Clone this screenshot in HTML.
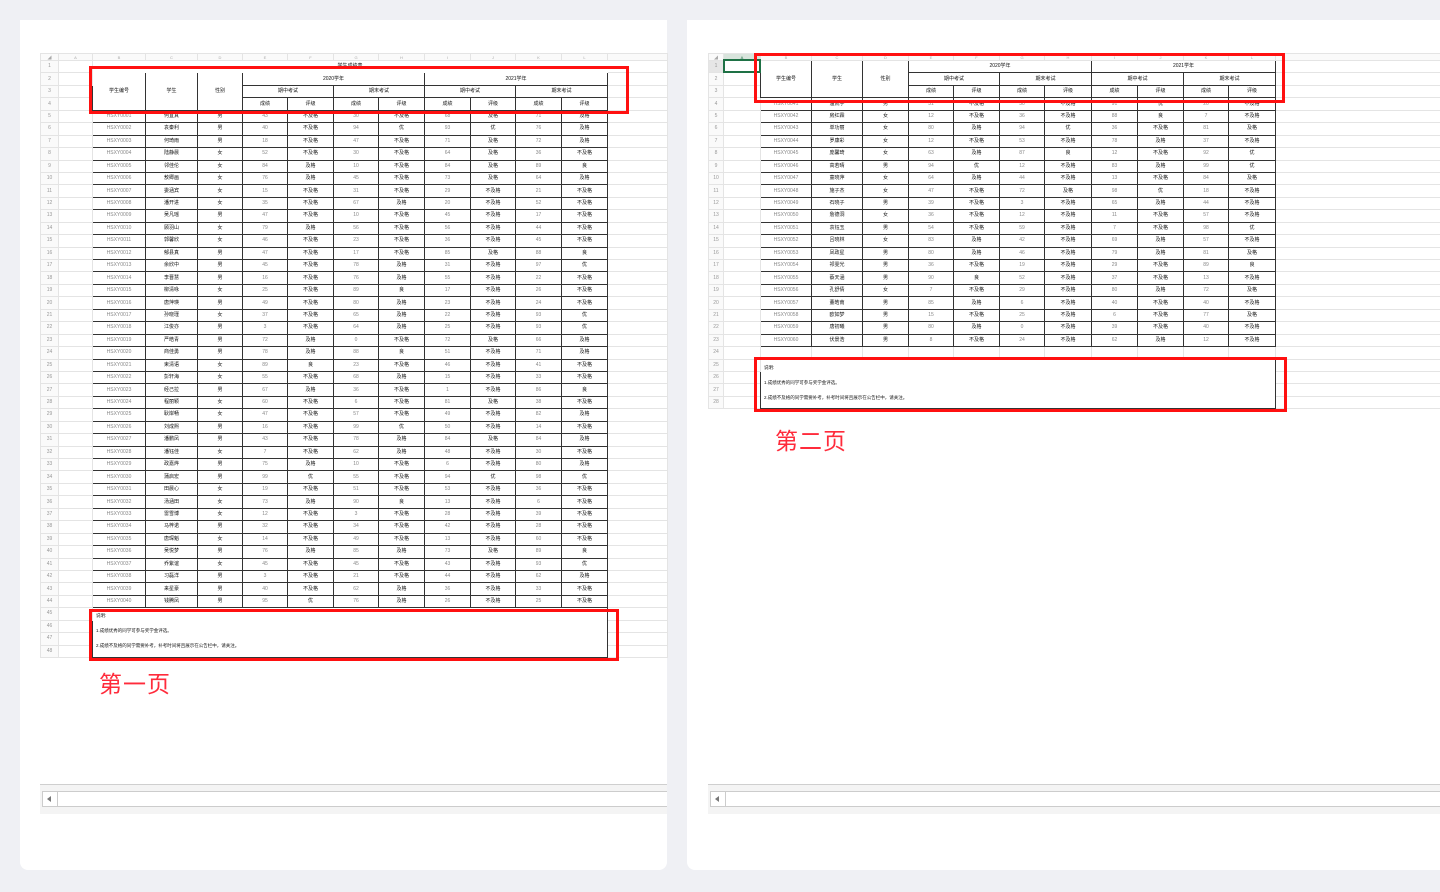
<!DOCTYPE html>
<html><head><meta charset="utf-8"><style>
html,body{margin:0;padding:0;width:1440px;height:892px;overflow:hidden;background:#eff0f4;font-family:"Liberation Sans","Noto Sans CJK SC",sans-serif}
.card{position:absolute;background:#fff;border-radius:0 0 8px 8px;overflow:hidden}
.sheet{position:absolute;border-collapse:collapse;table-layout:fixed;font-size:5px;line-height:5px}
.sheet td,.sheet th{border:1px solid #e4e4e4;padding:0;text-align:center;overflow:hidden;white-space:nowrap;color:#111;font-weight:normal}
.sheet tr{height:12.44px}
.sheet tr.ch{height:7px}
.sheet tr.ch th{color:#aaa;font-size:4px;background:#fafafa}
.sheet th.rn{color:#999;background:#fafafa}
.sheet td.k{border:1px solid #333}
tr.d>td:nth-child(n+3):nth-child(-n+13){border:1px solid #333}
tr.d>td:nth-child(3),tr.d>td:nth-child(6),tr.d>td:nth-child(8),tr.d>td:nth-child(10),tr.d>td:nth-child(12){color:#888}
.note{text-align:left!important;padding-left:3px!important;font-size:4.5px;line-height:15px;vertical-align:top}
.red{position:absolute;border:3px solid #ff1010;box-sizing:border-box}
.lbl{position:absolute;color:#ff2b3b;font-size:23px;font-family:"Noto Sans CJK SC",sans-serif;letter-spacing:1px}
.sb{position:absolute;height:29px;border-top:1px solid #cfcfcf;background:#f4f4f4}
.sb .bar{position:absolute;left:2px;right:0;top:6px;height:14px;background:#fff;border-top:1px solid #ccc;border-bottom:1px solid #ccc}
.sb .arr{position:absolute;left:0;top:0;width:14px;height:14px;border-right:1px solid #ccc;border-left:1px solid #ccc}
.sb .arr:after{content:"";position:absolute;left:4px;top:4px;border-right:4px solid #777;border-top:3px solid transparent;border-bottom:3px solid transparent}
.sel{position:absolute;border:2px solid #1e7145;box-sizing:border-box}
</style></head><body>

<div class="card" style="left:20px;top:20px;width:647px;height:850px"></div>
<div class="card" style="left:687px;top:20px;width:760px;height:850px"></div>

<!-- LEFT SHEET -->
<table class="sheet" style="left:40px;top:53px;width:627px">
<colgroup><col style="width:18px"><col style="width:34px"><col style="width:53px"><col style="width:52px"><col style="width:45px"><col style="width:45px"><col style="width:46px"><col style="width:45px"><col style="width:46px"><col style="width:46px"><col style="width:45px"><col style="width:46px"><col style="width:46px"><col style="width:60px"></colgroup>
<tr class="ch"><th>◢</th><th>A</th><th>B</th><th>C</th><th>D</th><th>E</th><th>F</th><th>G</th><th>H</th><th>I</th><th>J</th><th>K</th><th>L</th><th></th></tr>
<tr><th class="rn">1</th><td></td><td colspan="11" style="border-color:#fff">学生成绩表</td><td></td></tr>
<tr><th class="rn">2</th><td></td><td class="k" rowspan="3">学生编号</td><td class="k" rowspan="3">学生</td><td class="k" rowspan="3">性别</td><td class="k" colspan="4">2020学年</td><td class="k" colspan="4">2021学年</td><td></td></tr>
<tr><th class="rn">3</th><td></td><td class="k" colspan="2">期中考试</td><td class="k" colspan="2">期末考试</td><td class="k" colspan="2">期中考试</td><td class="k" colspan="2">期末考试</td><td></td></tr>
<tr><th class="rn">4</th><td></td><td class="k">成绩</td><td class="k">评级</td><td class="k">成绩</td><td class="k">评级</td><td class="k">成绩</td><td class="k">评级</td><td class="k">成绩</td><td class="k">评级</td><td></td></tr>
<tr class="d"><th class="rn">5</th><td></td><td>HSXY0001</td><td>何宜真</td><td>男</td><td>43</td><td>不及格</td><td>30</td><td>不及格</td><td>68</td><td>及格</td><td>71</td><td>及格</td><td></td></tr>
<tr class="d"><th class="rn">6</th><td></td><td>HSXY0002</td><td>袁秦利</td><td>男</td><td>40</td><td>不及格</td><td>94</td><td>优</td><td>93</td><td>优</td><td>76</td><td>及格</td><td></td></tr>
<tr class="d"><th class="rn">7</th><td></td><td>HSXY0003</td><td>何琦雨</td><td>男</td><td>18</td><td>不及格</td><td>47</td><td>不及格</td><td>71</td><td>及格</td><td>72</td><td>及格</td><td></td></tr>
<tr class="d"><th class="rn">8</th><td></td><td>HSXY0004</td><td>陆静晨</td><td>女</td><td>52</td><td>不及格</td><td>30</td><td>不及格</td><td>64</td><td>及格</td><td>36</td><td>不及格</td><td></td></tr>
<tr class="d"><th class="rn">9</th><td></td><td>HSXY0005</td><td>邻佳伦</td><td>女</td><td>84</td><td>及格</td><td>10</td><td>不及格</td><td>84</td><td>及格</td><td>89</td><td>良</td><td></td></tr>
<tr class="d"><th class="rn">10</th><td></td><td>HSXY0006</td><td>敖卿画</td><td>女</td><td>76</td><td>及格</td><td>45</td><td>不及格</td><td>73</td><td>及格</td><td>64</td><td>及格</td><td></td></tr>
<tr class="d"><th class="rn">11</th><td></td><td>HSXY0007</td><td>委涵宾</td><td>女</td><td>15</td><td>不及格</td><td>31</td><td>不及格</td><td>29</td><td>不及格</td><td>21</td><td>不及格</td><td></td></tr>
<tr class="d"><th class="rn">12</th><td></td><td>HSXY0008</td><td>潘开进</td><td>女</td><td>35</td><td>不及格</td><td>67</td><td>及格</td><td>20</td><td>不及格</td><td>52</td><td>不及格</td><td></td></tr>
<tr class="d"><th class="rn">13</th><td></td><td>HSXY0009</td><td>吴凡瑶</td><td>男</td><td>47</td><td>不及格</td><td>10</td><td>不及格</td><td>45</td><td>不及格</td><td>17</td><td>不及格</td><td></td></tr>
<tr class="d"><th class="rn">14</th><td></td><td>HSXY0010</td><td>顾羽山</td><td>女</td><td>79</td><td>及格</td><td>56</td><td>不及格</td><td>56</td><td>不及格</td><td>44</td><td>不及格</td><td></td></tr>
<tr class="d"><th class="rn">15</th><td></td><td>HSXY0011</td><td>郭馨欣</td><td>女</td><td>46</td><td>不及格</td><td>23</td><td>不及格</td><td>36</td><td>不及格</td><td>45</td><td>不及格</td><td></td></tr>
<tr class="d"><th class="rn">16</th><td></td><td>HSXY0012</td><td>郁县真</td><td>男</td><td>47</td><td>不及格</td><td>17</td><td>不及格</td><td>85</td><td>及格</td><td>88</td><td>良</td><td></td></tr>
<tr class="d"><th class="rn">17</th><td></td><td>HSXY0013</td><td>余欣中</td><td>男</td><td>45</td><td>不及格</td><td>78</td><td>及格</td><td>31</td><td>不及格</td><td>97</td><td>优</td><td></td></tr>
<tr class="d"><th class="rn">18</th><td></td><td>HSXY0014</td><td>李晋慧</td><td>男</td><td>16</td><td>不及格</td><td>76</td><td>及格</td><td>55</td><td>不及格</td><td>22</td><td>不及格</td><td></td></tr>
<tr class="d"><th class="rn">19</th><td></td><td>HSXY0015</td><td>柳清咏</td><td>女</td><td>25</td><td>不及格</td><td>89</td><td>良</td><td>17</td><td>不及格</td><td>26</td><td>不及格</td><td></td></tr>
<tr class="d"><th class="rn">20</th><td></td><td>HSXY0016</td><td>唐萍瑛</td><td>男</td><td>49</td><td>不及格</td><td>80</td><td>及格</td><td>23</td><td>不及格</td><td>24</td><td>不及格</td><td></td></tr>
<tr class="d"><th class="rn">21</th><td></td><td>HSXY0017</td><td>孙晓瑾</td><td>女</td><td>37</td><td>不及格</td><td>65</td><td>及格</td><td>22</td><td>不及格</td><td>93</td><td>优</td><td></td></tr>
<tr class="d"><th class="rn">22</th><td></td><td>HSXY0018</td><td>江俊亦</td><td>男</td><td>3</td><td>不及格</td><td>64</td><td>及格</td><td>25</td><td>不及格</td><td>93</td><td>优</td><td></td></tr>
<tr class="d"><th class="rn">23</th><td></td><td>HSXY0019</td><td>严皓青</td><td>男</td><td>72</td><td>及格</td><td>0</td><td>不及格</td><td>72</td><td>及格</td><td>66</td><td>及格</td><td></td></tr>
<tr class="d"><th class="rn">24</th><td></td><td>HSXY0020</td><td>商佳勇</td><td>男</td><td>78</td><td>及格</td><td>88</td><td>良</td><td>51</td><td>不及格</td><td>71</td><td>及格</td><td></td></tr>
<tr class="d"><th class="rn">25</th><td></td><td>HSXY0021</td><td>束清语</td><td>女</td><td>89</td><td>良</td><td>23</td><td>不及格</td><td>46</td><td>不及格</td><td>41</td><td>不及格</td><td></td></tr>
<tr class="d"><th class="rn">26</th><td></td><td>HSXY0022</td><td>彭轩海</td><td>女</td><td>55</td><td>不及格</td><td>68</td><td>及格</td><td>15</td><td>不及格</td><td>33</td><td>不及格</td><td></td></tr>
<tr class="d"><th class="rn">27</th><td></td><td>HSXY0023</td><td>经己拉</td><td>男</td><td>67</td><td>及格</td><td>36</td><td>不及格</td><td>1</td><td>不及格</td><td>86</td><td>良</td><td></td></tr>
<tr class="d"><th class="rn">28</th><td></td><td>HSXY0024</td><td>程丽颖</td><td>女</td><td>60</td><td>不及格</td><td>6</td><td>不及格</td><td>81</td><td>及格</td><td>38</td><td>不及格</td><td></td></tr>
<tr class="d"><th class="rn">29</th><td></td><td>HSXY0025</td><td>耿岸畅</td><td>女</td><td>47</td><td>不及格</td><td>57</td><td>不及格</td><td>49</td><td>不及格</td><td>82</td><td>及格</td><td></td></tr>
<tr class="d"><th class="rn">30</th><td></td><td>HSXY0026</td><td>刘成熙</td><td>男</td><td>16</td><td>不及格</td><td>99</td><td>优</td><td>50</td><td>不及格</td><td>14</td><td>不及格</td><td></td></tr>
<tr class="d"><th class="rn">31</th><td></td><td>HSXY0027</td><td>潘鹏凤</td><td>男</td><td>43</td><td>不及格</td><td>78</td><td>及格</td><td>84</td><td>及格</td><td>84</td><td>及格</td><td></td></tr>
<tr class="d"><th class="rn">32</th><td></td><td>HSXY0028</td><td>潘钰佳</td><td>女</td><td>7</td><td>不及格</td><td>62</td><td>及格</td><td>48</td><td>不及格</td><td>30</td><td>不及格</td><td></td></tr>
<tr class="d"><th class="rn">33</th><td></td><td>HSXY0029</td><td>政嘉烨</td><td>男</td><td>75</td><td>及格</td><td>10</td><td>不及格</td><td>6</td><td>不及格</td><td>80</td><td>及格</td><td></td></tr>
<tr class="d"><th class="rn">34</th><td></td><td>HSXY0030</td><td>蒲启宏</td><td>男</td><td>99</td><td>优</td><td>55</td><td>不及格</td><td>94</td><td>优</td><td>98</td><td>优</td><td></td></tr>
<tr class="d"><th class="rn">35</th><td></td><td>HSXY0031</td><td>田晨心</td><td>女</td><td>19</td><td>不及格</td><td>51</td><td>不及格</td><td>53</td><td>不及格</td><td>36</td><td>不及格</td><td></td></tr>
<tr class="d"><th class="rn">36</th><td></td><td>HSXY0032</td><td>汤涵田</td><td>女</td><td>73</td><td>及格</td><td>90</td><td>良</td><td>13</td><td>不及格</td><td>6</td><td>不及格</td><td></td></tr>
<tr class="d"><th class="rn">37</th><td></td><td>HSXY0033</td><td>雷雪博</td><td>女</td><td>12</td><td>不及格</td><td>3</td><td>不及格</td><td>28</td><td>不及格</td><td>39</td><td>不及格</td><td></td></tr>
<tr class="d"><th class="rn">38</th><td></td><td>HSXY0034</td><td>马梓诺</td><td>男</td><td>32</td><td>不及格</td><td>34</td><td>不及格</td><td>42</td><td>不及格</td><td>28</td><td>不及格</td><td></td></tr>
<tr class="d"><th class="rn">39</th><td></td><td>HSXY0035</td><td>唐琛魁</td><td>女</td><td>14</td><td>不及格</td><td>49</td><td>不及格</td><td>13</td><td>不及格</td><td>60</td><td>不及格</td><td></td></tr>
<tr class="d"><th class="rn">40</th><td></td><td>HSXY0036</td><td>吴悦梦</td><td>男</td><td>76</td><td>及格</td><td>85</td><td>及格</td><td>73</td><td>及格</td><td>89</td><td>良</td><td></td></tr>
<tr class="d"><th class="rn">41</th><td></td><td>HSXY0037</td><td>乔紫谊</td><td>女</td><td>45</td><td>不及格</td><td>45</td><td>不及格</td><td>43</td><td>不及格</td><td>93</td><td>优</td><td></td></tr>
<tr class="d"><th class="rn">42</th><td></td><td>HSXY0038</td><td>习磊洋</td><td>男</td><td>3</td><td>不及格</td><td>21</td><td>不及格</td><td>44</td><td>不及格</td><td>62</td><td>及格</td><td></td></tr>
<tr class="d"><th class="rn">43</th><td></td><td>HSXY0039</td><td>来星豪</td><td>男</td><td>40</td><td>不及格</td><td>62</td><td>及格</td><td>36</td><td>不及格</td><td>33</td><td>不及格</td><td></td></tr>
<tr class="d"><th class="rn">44</th><td></td><td>HSXY0040</td><td>钱腾凤</td><td>男</td><td>95</td><td>优</td><td>76</td><td>及格</td><td>26</td><td>不及格</td><td>25</td><td>不及格</td><td></td></tr>
<tr><th class="rn">45</th><td></td><td class="k note" colspan="11" rowspan="4" style="border-width:1px 1px 2px 1px">说明:<br>1.成绩优秀的同学可参与奖学金评选。<br>2.成绩不及格的同学需要补考，补考时间将且展示在公告栏中，请关注。</td><td></td></tr>
<tr><th class="rn">46</th><td></td><td></td></tr>
<tr><th class="rn">47</th><td></td><td></td></tr>
<tr><th class="rn">48</th><td></td><td></td></tr>
</table>

<!-- RIGHT SHEET -->
<table class="sheet" style="left:708px;top:53px;width:740px">
<colgroup><col style="width:15px"><col style="width:37px"><col style="width:51px"><col style="width:51px"><col style="width:46px"><col style="width:45px"><col style="width:46px"><col style="width:45px"><col style="width:47px"><col style="width:46px"><col style="width:46px"><col style="width:45px"><col style="width:47px"><col style="width:173px"></colgroup>
<tr class="ch"><th>◢</th><th style="background:#d8e4dc;color:#1e7145">A</th><th>B</th><th>C</th><th>D</th><th>E</th><th>F</th><th>G</th><th>H</th><th>I</th><th>J</th><th>K</th><th>L</th><th></th></tr>
<tr><th class="rn" style="background:#e6e6e6">1</th><td></td><td class="k" rowspan="3">学生编号</td><td class="k" rowspan="3">学生</td><td class="k" rowspan="3">性别</td><td class="k" colspan="4">2020学年</td><td class="k" colspan="4">2021学年</td><td></td></tr>
<tr><th class="rn">2</th><td></td><td class="k" colspan="2">期中考试</td><td class="k" colspan="2">期末考试</td><td class="k" colspan="2">期中考试</td><td class="k" colspan="2">期末考试</td><td></td></tr>
<tr><th class="rn">3</th><td></td><td class="k">成绩</td><td class="k">评级</td><td class="k">成绩</td><td class="k">评级</td><td class="k">成绩</td><td class="k">评级</td><td class="k">成绩</td><td class="k">评级</td><td></td></tr>
<tr class="d"><th class="rn">4</th><td></td><td>HSXY0041</td><td>温凯宇</td><td>男</td><td>31</td><td>不及格</td><td>30</td><td>不及格</td><td>91</td><td>优</td><td>20</td><td>不及格</td><td></td></tr>
<tr class="d"><th class="rn">5</th><td></td><td>HSXY0042</td><td>房红霖</td><td>女</td><td>12</td><td>不及格</td><td>36</td><td>不及格</td><td>88</td><td>良</td><td>7</td><td>不及格</td><td></td></tr>
<tr class="d"><th class="rn">6</th><td></td><td>HSXY0043</td><td>单功丽</td><td>女</td><td>80</td><td>及格</td><td>94</td><td>优</td><td>36</td><td>不及格</td><td>81</td><td>及格</td><td></td></tr>
<tr class="d"><th class="rn">7</th><td></td><td>HSXY0044</td><td>罗康彩</td><td>女</td><td>12</td><td>不及格</td><td>53</td><td>不及格</td><td>78</td><td>及格</td><td>37</td><td>不及格</td><td></td></tr>
<tr class="d"><th class="rn">8</th><td></td><td>HSXY0045</td><td>庞馨琦</td><td>女</td><td>63</td><td>及格</td><td>87</td><td>良</td><td>12</td><td>不及格</td><td>92</td><td>优</td><td></td></tr>
<tr class="d"><th class="rn">9</th><td></td><td>HSXY0046</td><td>高若晴</td><td>男</td><td>94</td><td>优</td><td>12</td><td>不及格</td><td>83</td><td>及格</td><td>99</td><td>优</td><td></td></tr>
<tr class="d"><th class="rn">10</th><td></td><td>HSXY0047</td><td>童晓萍</td><td>女</td><td>64</td><td>及格</td><td>44</td><td>不及格</td><td>13</td><td>不及格</td><td>84</td><td>及格</td><td></td></tr>
<tr class="d"><th class="rn">11</th><td></td><td>HSXY0048</td><td>施子杰</td><td>女</td><td>47</td><td>不及格</td><td>72</td><td>及格</td><td>98</td><td>优</td><td>18</td><td>不及格</td><td></td></tr>
<tr class="d"><th class="rn">12</th><td></td><td>HSXY0049</td><td>石晓子</td><td>男</td><td>39</td><td>不及格</td><td>3</td><td>不及格</td><td>65</td><td>及格</td><td>44</td><td>不及格</td><td></td></tr>
<tr class="d"><th class="rn">13</th><td></td><td>HSXY0050</td><td>詹德洞</td><td>女</td><td>36</td><td>不及格</td><td>12</td><td>不及格</td><td>11</td><td>不及格</td><td>57</td><td>不及格</td><td></td></tr>
<tr class="d"><th class="rn">14</th><td></td><td>HSXY0051</td><td>袁钰玉</td><td>男</td><td>54</td><td>不及格</td><td>59</td><td>不及格</td><td>7</td><td>不及格</td><td>98</td><td>优</td><td></td></tr>
<tr class="d"><th class="rn">15</th><td></td><td>HSXY0052</td><td>吕晓林</td><td>女</td><td>83</td><td>及格</td><td>42</td><td>不及格</td><td>69</td><td>及格</td><td>57</td><td>不及格</td><td></td></tr>
<tr class="d"><th class="rn">16</th><td></td><td>HSXY0053</td><td>凤政星</td><td>男</td><td>80</td><td>及格</td><td>46</td><td>不及格</td><td>79</td><td>及格</td><td>81</td><td>及格</td><td></td></tr>
<tr class="d"><th class="rn">17</th><td></td><td>HSXY0054</td><td>祁雯光</td><td>男</td><td>36</td><td>不及格</td><td>19</td><td>不及格</td><td>29</td><td>不及格</td><td>89</td><td>良</td><td></td></tr>
<tr class="d"><th class="rn">18</th><td></td><td>HSXY0055</td><td>蔡天涵</td><td>男</td><td>90</td><td>良</td><td>52</td><td>不及格</td><td>37</td><td>不及格</td><td>13</td><td>不及格</td><td></td></tr>
<tr class="d"><th class="rn">19</th><td></td><td>HSXY0056</td><td>孔舒倩</td><td>女</td><td>7</td><td>不及格</td><td>29</td><td>不及格</td><td>80</td><td>及格</td><td>72</td><td>及格</td><td></td></tr>
<tr class="d"><th class="rn">20</th><td></td><td>HSXY0057</td><td>董皓南</td><td>男</td><td>85</td><td>及格</td><td>6</td><td>不及格</td><td>40</td><td>不及格</td><td>40</td><td>不及格</td><td></td></tr>
<tr class="d"><th class="rn">21</th><td></td><td>HSXY0058</td><td>欧如梦</td><td>男</td><td>15</td><td>不及格</td><td>25</td><td>不及格</td><td>6</td><td>不及格</td><td>77</td><td>及格</td><td></td></tr>
<tr class="d"><th class="rn">22</th><td></td><td>HSXY0059</td><td>唐初曦</td><td>男</td><td>80</td><td>及格</td><td>0</td><td>不及格</td><td>39</td><td>不及格</td><td>40</td><td>不及格</td><td></td></tr>
<tr class="d"><th class="rn">23</th><td></td><td>HSXY0060</td><td>伏景浩</td><td>男</td><td>8</td><td>不及格</td><td>24</td><td>不及格</td><td>62</td><td>及格</td><td>12</td><td>不及格</td><td></td></tr>
<tr><th class="rn">24</th><td></td><td></td><td></td><td></td><td></td><td></td><td></td><td></td><td></td><td></td><td></td><td></td><td></td></tr>
<tr><th class="rn">25</th><td></td><td class="k note" colspan="11" rowspan="4" style="border-width:1px 1px 2px 1px">说明:<br>1.成绩优秀的同学可参与奖学金评选。<br>2.成绩不及格的同学需要补考，补考时间将且展示在公告栏中，请关注。</td><td></td></tr>
<tr><th class="rn">26</th><td></td><td></td></tr>
<tr><th class="rn">27</th><td></td><td></td></tr>
<tr><th class="rn">28</th><td></td><td></td></tr>
</table>
<div class="sel" style="left:723px;top:59px;width:38px;height:14px"></div>

<!-- red boxes -->
<div class="red" style="left:89px;top:66px;width:540px;height:48px"></div>
<div class="red" style="left:89px;top:609px;width:530px;height:52px"></div>
<div class="red" style="left:754px;top:53px;width:531px;height:50px"></div>
<div class="red" style="left:754px;top:357px;width:533px;height:55px"></div>
<div class="lbl" style="left:99px;top:665px">第一页</div>
<div class="lbl" style="left:775px;top:422px">第二页</div>

<!-- scrollbars -->
<div class="sb" style="left:40px;top:784px;width:627px"><div class="bar"><div class="arr"></div></div></div>
<div class="sb" style="left:708px;top:784px;width:732px"><div class="bar"><div class="arr"></div></div></div>
</body></html>
